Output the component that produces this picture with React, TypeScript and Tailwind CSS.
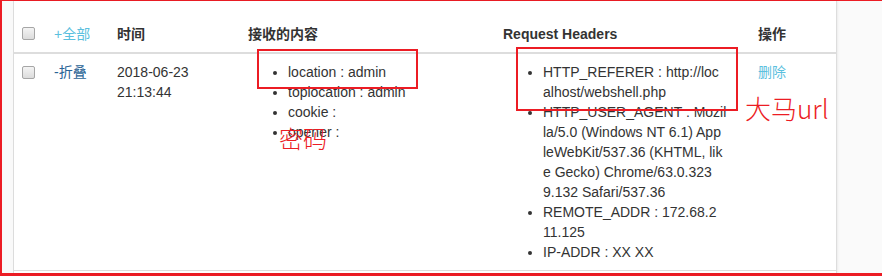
function Checkbox() {
  return (
    <div className="w-[13px] h-[13px] rounded-[2px] border border-[#a6a6a6] bg-gradient-to-b from-[#f4f4f4] to-[#dcdcdc]" />
  );
}

const received = [
  "location : admin",
  "toplocation : admin",
  "cookie :",
  "opener :",
];

// wrapped the same way the screenshot does (break-all)
const headers = [
  ["HTTP_REFERER : http://loc", "alhost/webshell.php"],
  [
    "HTTP_USER_AGENT : Mozil",
    "la/5.0 (Windows NT 6.1) App",
    "leWebKit/537.36 (KHTML, lik",
    "e Gecko) Chrome/63.0.323",
    "9.132 Safari/537.36",
  ],
  ["REMOTE_ADDR : 172.68.2", "11.125"],
  ["IP-ADDR : XX XX"],
];

export default function App() {
  return (
    <div
      className="w-[882px] h-[276px] flex border-t border-l-2 border-b-[3px] border-[#ec1c24] bg-[#fafafa] text-[14px] leading-[20px] text-[#333]"
      style={{ fontFamily: '"Liberation Sans", Arial, "Noto Sans CJK SC", sans-serif' }}
    >
      <div className="w-[12px] shrink-0 bg-[#f9f9f9] border-r border-[#ddd]" />

      <div className="relative w-[823px] shrink-0 bg-white border-r border-[#ddd] pt-[15px] shadow-[1px_0_2px_rgba(0,0,0,0.06)]">
        <table className="w-[823px] table-fixed border-collapse">
          <colgroup>
            <col className="w-[32px]" />
            <col className="w-[63px]" />
            <col className="w-[131px]" />
            <col className="w-[255px]" />
            <col className="w-[255px]" />
            <col className="w-[87px]" />
          </colgroup>
          <thead>
            <tr className="border-b-2 border-[#ddd] text-left">
              <th className="p-2 align-top font-normal">
                <div className="pt-[3px]">
                  <Checkbox />
                </div>
              </th>
              <th className="p-2 align-top font-normal text-[#5bc0de]">+全部</th>
              <th className="p-2 align-top font-bold">时间</th>
              <th className="p-2 align-top font-bold">接收的内容</th>
              <th className="p-2 align-top font-bold">Request Headers</th>
              <th className="p-2 align-top font-bold">操作</th>
            </tr>
          </thead>
          <tbody>
            <tr className="border-b border-[#ddd]">
              <td className="p-2 align-top">
                <div className="pt-[4px]">
                  <Checkbox />
                </div>
              </td>
              <td className="p-2 align-top text-[#2a6496]">-折叠</td>
              <td className="p-2 align-top">
                2018-06-23
                <br />
                21:13:44
              </td>
              <td className="p-2 align-top">
                <ul className="list-disc pl-10">
                  {received.map((r) => (
                    <li key={r}>{r}</li>
                  ))}
                </ul>
              </td>
              <td className="p-2 align-top">
                <ul className="list-disc pl-10">
                  {headers.map((lines) => (
                    <li key={lines[0]} className="whitespace-nowrap">
                      {lines.map((l, i) => (
                        <span key={i} className="block">
                          {l}
                        </span>
                      ))}
                    </li>
                  ))}
                </ul>
              </td>
              <td className="p-2 align-top text-[#5bc0de]">删除</td>
            </tr>
          </tbody>
        </table>

        {/* annotations */}
        <div className="absolute left-[243px] top-[48px] w-[161px] h-[40px] border-2 border-[#ec1c24]" />
        <div className="absolute left-[502px] top-[46px] w-[222px] h-[64px] border-2 border-[#ec1c24]" />
        <div
          className="absolute left-[265px] top-[122px] text-[24px] leading-[30px] text-[#ec1c24]"
          style={{ fontFamily: '"Noto Sans CJK SC", sans-serif', fontWeight: 300 }}
        >
          密码
        </div>
        <div
          className="absolute left-[731px] top-[91px] text-[26px] leading-[32px] text-[#ec1c24]"
          style={{ fontFamily: '"Noto Sans CJK SC", sans-serif', fontWeight: 300 }}
        >
          大马url
        </div>
      </div>

      <div className="flex-1" />
    </div>
  );
}
